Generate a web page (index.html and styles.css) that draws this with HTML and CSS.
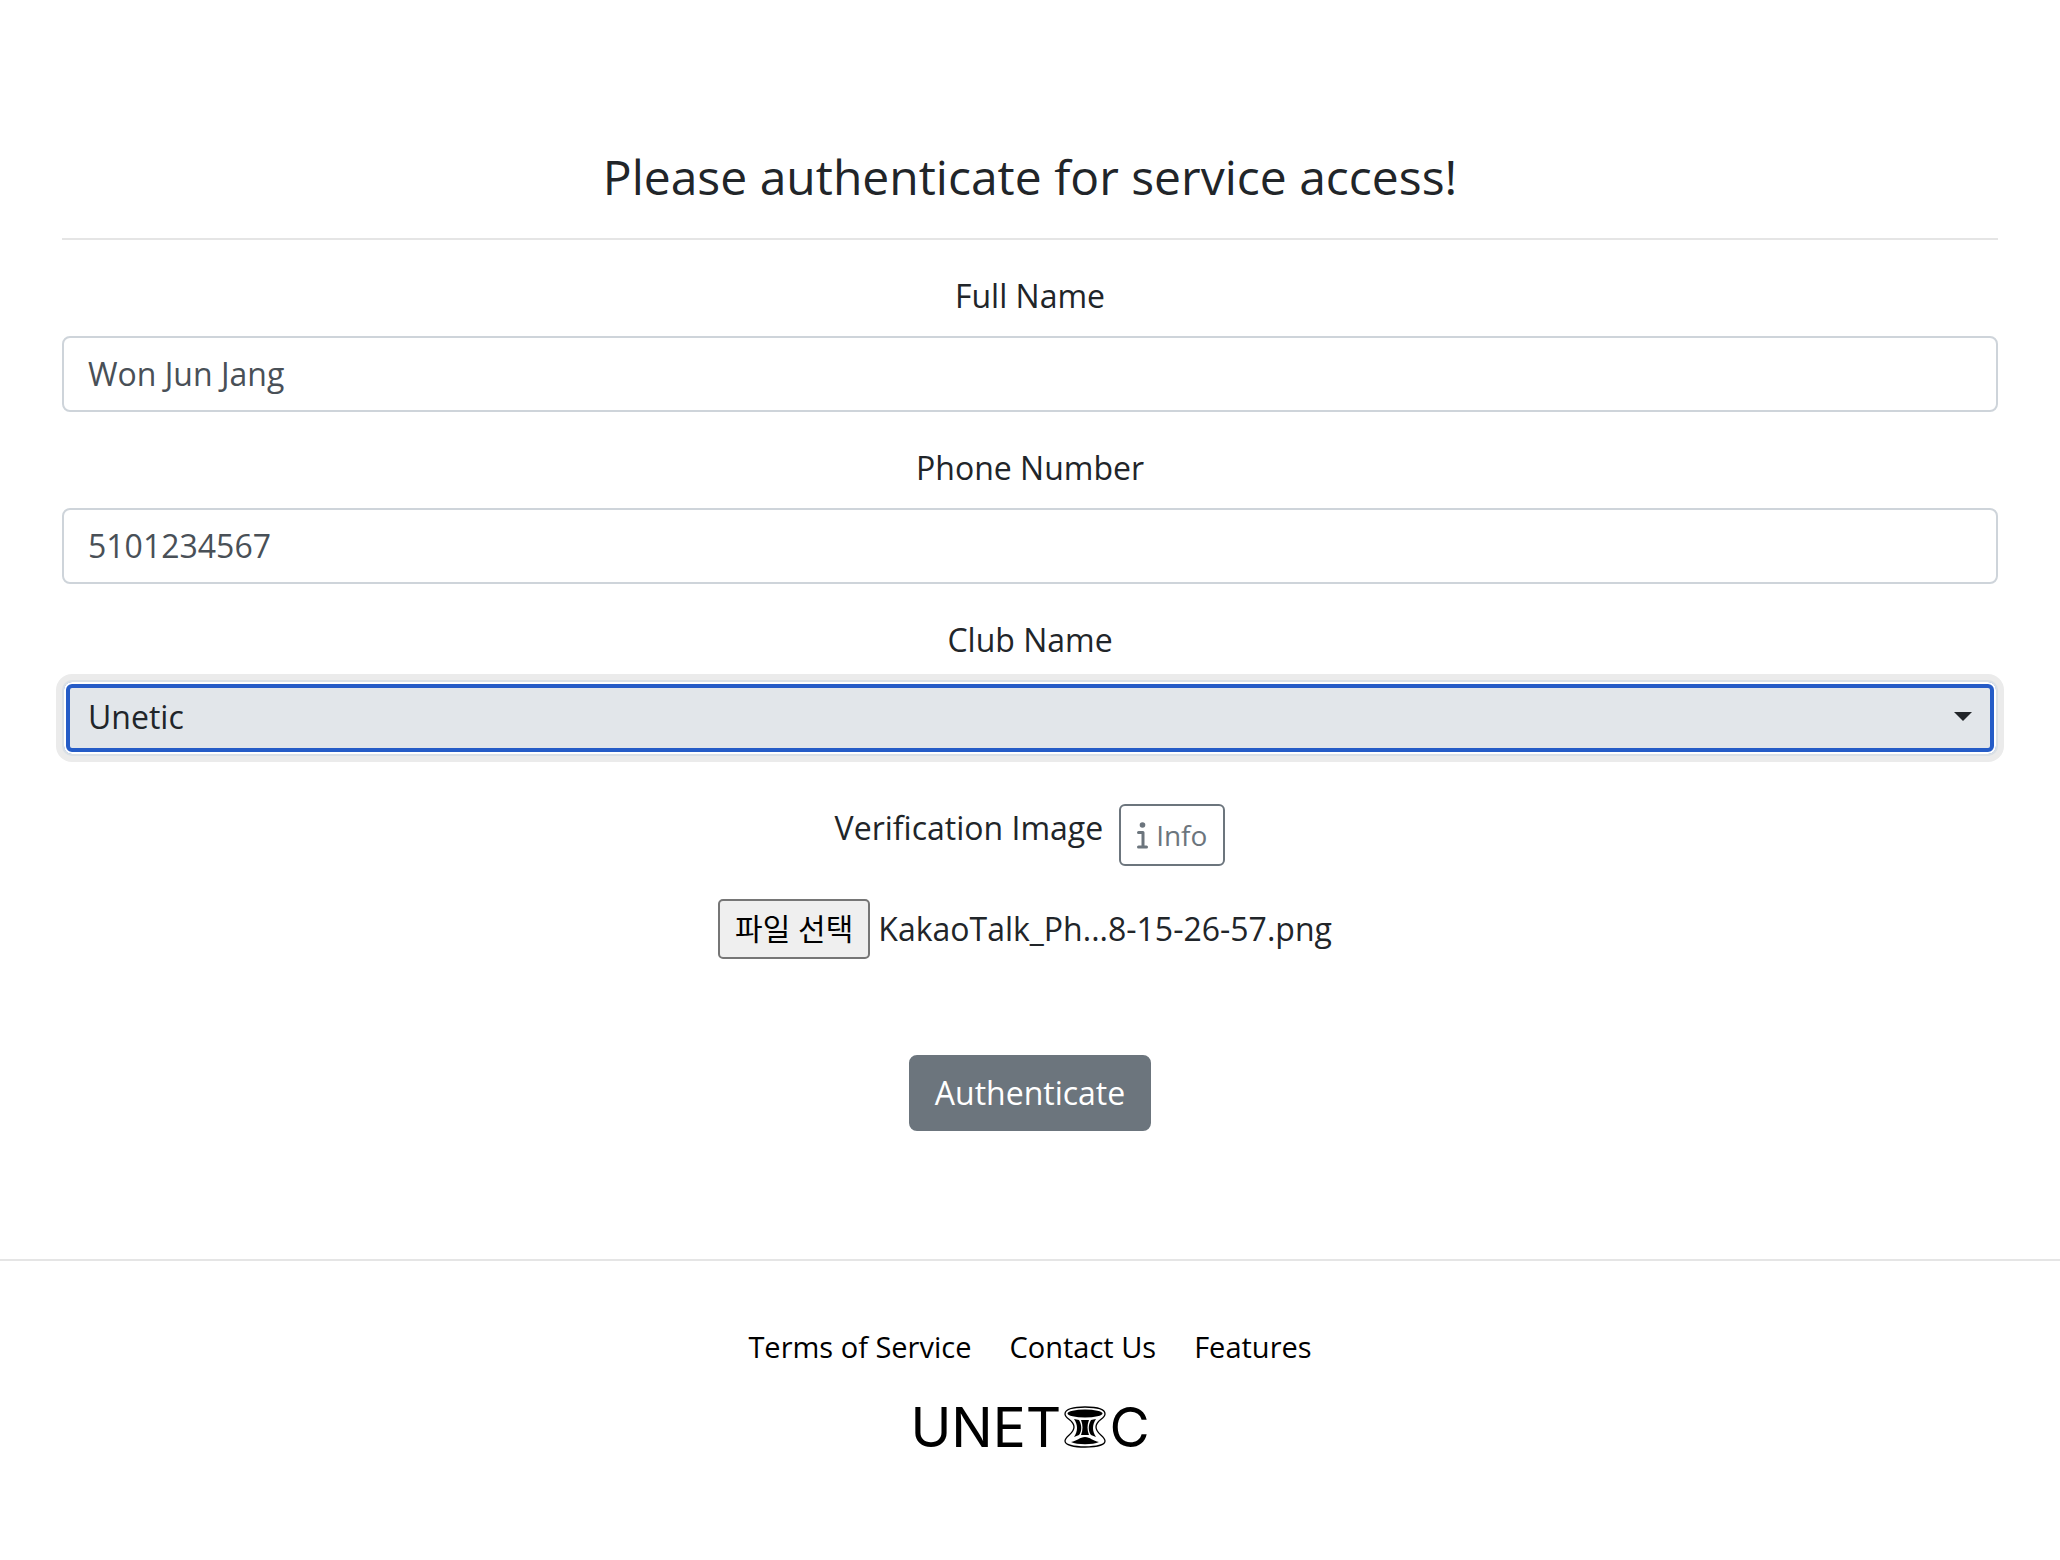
FILE: index.html
```
<!DOCTYPE html>
<html lang="en">
<head>
    <meta charset="UTF-8">
    <meta name="viewport" content="width=device-width, initial-scale=1.0">
    <title>Unetic</title>
    <link rel="stylesheet" href="styles.css">
</head>
<body>
    <main class="container">
        <h1>Please authenticate for service access!</h1>
        <hr>
        <form>
            <div class="form-group">
                <label for="fullName">Full Name</label>
                <input type="text" class="form-control" id="fullName" value="Won Jun Jang">
            </div>
            <div class="form-group">
                <label for="phone">Phone Number</label>
                <input type="tel" class="form-control" id="phone" value="5101234567">
            </div>
            <div class="form-group">
                <label for="club">Club Name</label>
                <select class="form-control club-select" id="club">
                    <option>Unetic</option>
                </select>
            </div>
            <div class="verify">
                <label for="verifyImage">Verification Image</label>
                <button type="button" class="btn-info">
                    <svg class="info-icon" viewBox="0 0 11 27" aria-hidden="true">
                        <circle cx="5.500" cy="3" r="2.800"/>
                        <path d="M1.500 10.500H6V25M1.500 25H9.500" fill="none" stroke="#6c757d" stroke-width="3" stroke-linecap="round" stroke-linejoin="round"/>
                    </svg>
                    Info
                </button>
            </div>
            <div class="file-row">
                <input type="file" class="file-input" id="verifyImage" accept="image/*">
                <label class="file-btn" for="verifyImage" lang="ko">파일 선택</label>
                <span>KakaoTalk_Ph...8-15-26-57.png</span>
            </div>
            <button type="submit" class="btn-submit">Authenticate</button>
        </form>
    </main>
    <footer>
        <nav>
            <a href="#">Terms of Service</a>
            <a href="#">Contact Us</a>
            <a href="#">Features</a>
        </nav>
        <div class="logo">
            <span>UNET</span>
            <svg class="spool" viewBox="0 0 42 42" aria-hidden="true">
                <path d="M21 1C32 1 41 3 41 8C41 13 32 14 32 21C32 28 41 30 41 35C41 39 32 41 21 41S1 39 1 35C1 30 10 28 10 21C10 14 1 13 1 8C1 3 10 1 21 1Z" fill="#fff" stroke="#000" stroke-width="1.300"/>
                <ellipse cx="21" cy="7.500" rx="17.500" ry="4"/>
                <path d="M7 36C13 35 16 31 21 31S29 35 35 36C29 39 13 39 7 36Z"/>
                <path d="M17 14H25C23 19 23 24 25 29H17C19 24 19 19 17 14Z"/>
                <path d="M10 13L15 14C18 19 18 25 15 29L10 31C14 25 14 19 10 13ZM32 13L27 14C24 19 24 25 27 29L32 31C28 25 28 19 32 13Z"/>
            </svg>
            <span>C</span>
        </div>
    </footer>
</body>
</html>
```
FILE: styles.css
```
* {
    box-sizing: border-box;
}
body {
    margin: 0;
    font-family: "Open Sans", "Noto Sans CJK KR", sans-serif;
    font-size: 32px;
    line-height: 48px;
    color: #212529;
    background: #fff;
    text-align: center;
}
.container {
    padding: 148px 62px 128px;
}
h1 {
    margin: 0;
    font-size: 48px;
    font-weight: 500;
    line-height: 58px;
}
hr {
    margin: 32px 0;
    border: 0;
    border-top: 2px solid #e5e5e5;
}
.form-group {
    margin-bottom: 32px;
}
.form-group label {
    display: block;
    margin-bottom: 16px;
}
.form-control {
    display: block;
    width: 100%;
    height: 76px;
    padding: 11px 24px 13px;
    font: inherit;
    color: #495057;
    background: #fff;
    border: 2px solid #ced4da;
    border-radius: 8px;
}
.club-select {
    appearance: none;
    color: #212529;
    background: #e2e6ea url("data:image/svg+xml,%3Csvg xmlns='http://www.w3.org/2000/svg' width='18' height='9'%3E%3Cpath d='M0 0h18L9 9z' fill='%23212529'/%3E%3C/svg%3E") no-repeat right 24px top 30px;
    border-color: #dae0e5;
    border-radius: 10px;
    outline: none;
    box-shadow: 0 0 0 6px #ebebeb, inset 0 0 0 2px #fff, inset 0 0 0 6px #255cc7;
}
.verify {
    display: flex;
    justify-content: center;
    align-items: flex-start;
    gap: 16px;
    padding-top: 16px;
}
.btn-info {
    display: flex;
    align-items: center;
    gap: 8px;
    padding: 8px 16px;
    font: inherit;
    font-size: 28px;
    line-height: 42px;
    color: #6c757d;
    background: #fff;
    border: 2px solid #6c757d;
    border-radius: 6px;
}
.info-icon {
    height: 27px;
    fill: #6c757d;
}
.file-row {
    display: flex;
    justify-content: center;
    align-items: center;
    gap: 8px;
    margin: 33px 0 96px;
    padding-right: 10px;
}
.file-input {
    position: absolute;
    width: 1px;
    height: 1px;
    opacity: 0;
}
.file-btn {
    padding: 4px 15px;
    font-size: 30px;
    color: #000;
    background: #efefef;
    border: 2px solid #767676;
    border-radius: 5px;
}
.btn-submit {
    padding: 12px 24px;
    font: inherit;
    color: #fff;
    background: #6c757d;
    border: 2px solid #6c757d;
    border-radius: 8px;
}
footer {
    padding: 62px 0;
    border-top: 2px solid #e5e5e5;
}
nav {
    display: flex;
    justify-content: center;
    gap: 38px;
    font-size: 29px;
}
nav a {
    color: #000;
    text-decoration: none;
}
.logo {
    display: flex;
    justify-content: center;
    align-items: center;
    gap: 3px;
    margin-top: 32px;
    font-family: Inter, sans-serif;
    font-size: 55px;
    color: #000;
}
.spool {
    width: 42px;
    height: 42px;
}
```
